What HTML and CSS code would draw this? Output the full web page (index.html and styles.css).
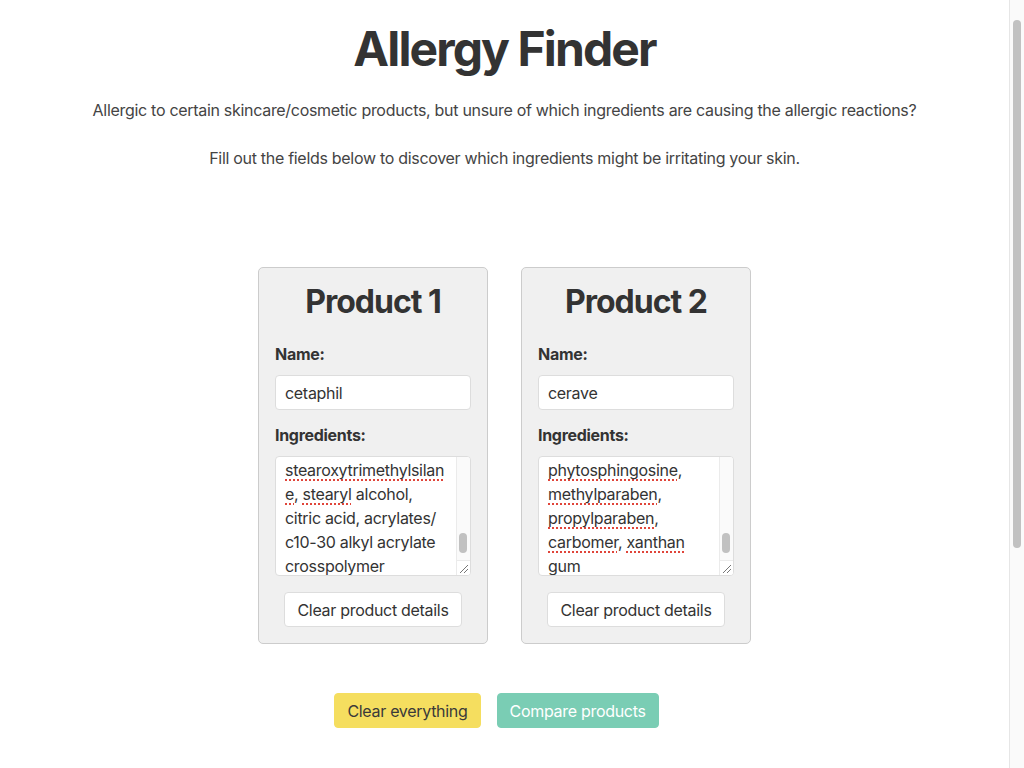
FILE: index.html
```html
<!DOCTYPE html>
<html lang="en">
<head>
<meta charset="utf-8">
<title>Allergy Finder</title>
<link rel="stylesheet" href="styles.css">
</head>
<body>
<main class="page">
  <header class="intro">
    <h1 class="title">Allergy Finder</h1>
    <p class="lead">Allergic to certain skincare/cosmetic products, but unsure of which ingredients are causing the allergic reactions?</p>
    <p class="lead">Fill out the fields below to discover which ingredients might be irritating your skin.</p>
  </header>

  <section class="products">
    <div class="card">
      <h2 class="card-title">Product 1</h2>
      <label class="field-label">Name:</label>
      <input class="text-input" type="text" value="cetaphil" spellcheck="false">
      <label class="field-label">Ingredients:</label>
      <div class="textbox">
        <div class="textbox-body">
          <div class="textbox-content"><span class="sp">stearoxytrimethylsilan</span><br><span class="sp">e</span>, <span class="sp">stearyl</span> alcohol,<br>citric acid, acrylates/<br>c10-30 alkyl acrylate<br><span class="sp">crosspolymer</span></div>
        </div>
        <div class="textbox-bar">
          <div class="bar-track"><div class="bar-thumb"></div></div>
          <div class="resizer"><svg width="13" height="13" viewBox="0 0 13 13"><path d="M3 11 L11 3 M7 11 L11 7" stroke="#777" stroke-width="1" fill="none"/></svg></div>
        </div>
      </div>
      <button class="btn btn-plain" type="button">Clear product details</button>
    </div>

    <div class="card">
      <h2 class="card-title">Product 2</h2>
      <label class="field-label">Name:</label>
      <input class="text-input" type="text" value="cerave" spellcheck="false">
      <label class="field-label">Ingredients:</label>
      <div class="textbox">
        <div class="textbox-body">
          <div class="textbox-content"><span class="sp">phytosphingosine</span>,<br><span class="sp">methylparaben</span>,<br><span class="sp">propylparaben</span>,<br><span class="sp">carbomer</span>, <span class="sp">xanthan</span><br>gum</div>
        </div>
        <div class="textbox-bar">
          <div class="bar-track"><div class="bar-thumb"></div></div>
          <div class="resizer"><svg width="13" height="13" viewBox="0 0 13 13"><path d="M3 11 L11 3 M7 11 L11 7" stroke="#777" stroke-width="1" fill="none"/></svg></div>
        </div>
      </div>
      <button class="btn btn-plain" type="button">Clear product details</button>
    </div>
  </section>

  <div class="actions">
    <button class="btn btn-yellow" type="button">Clear everything</button><button class="btn btn-teal" type="button">Compare products</button>
  </div>
</main>
<aside class="page-scrollbar"><div class="page-thumb"></div></aside>
</body>
</html>
```

FILE: styles.css
```css
html {
  background: #ffffff;
}

body {
  margin: 0;
  display: flex;
  align-items: flex-start;
  font-family: Inter, "Helvetica Neue", Arial, sans-serif;
  font-size: 16px;
  line-height: 24px;
  letter-spacing: -0.3px;
  color: #444444;
}

.page {
  flex: 1;
  min-width: 0;
  display: flex;
  flex-direction: column;
  align-items: center;
}

.page-scrollbar {
  width: 15px;
  height: 768px;
  box-sizing: border-box;
  background: #fafafa;
  border-left: 1px solid #e6e6e6;
  padding: 20px 3px 0 3px;
  flex-shrink: 0;
}

.page-thumb {
  width: 8px;
  height: 528px;
  border-radius: 4px;
  background: #c1c1c1;
}

.intro {
  text-align: center;
  padding-top: 20px;
}

.title {
  margin: 0 0 20px;
  font-size: 48px;
  line-height: 58px;
  font-weight: 700;
  color: #333333;
  letter-spacing: -1.9px;
}

.lead {
  margin: 0 0 24px;
  font-size: 16px;
  line-height: 24px;
  color: #444444;
}

.products {
  display: flex;
  gap: 33px;
  margin-top: 73px;
}

.card {
  width: 230px;
  box-sizing: border-box;
  background: #f0f0f0;
  border: 1px solid #cccccc;
  border-radius: 5px;
  padding: 15px 16px 16px;
  display: flex;
  flex-direction: column;
}

.card-title {
  margin: 0 0 21px;
  font-size: 32px;
  line-height: 38px;
  font-weight: 700;
  text-align: center;
  color: #333333;
  letter-spacing: -1px;
}

.field-label {
  font-weight: 700;
  color: #333333;
  line-height: 24px;
  margin-bottom: 9px;
}

.text-input {
  box-sizing: border-box;
  width: 100%;
  height: 35px;
  margin: 0 0 13px;
  padding: 0 9px;
  border: 1px solid #dddddd;
  border-radius: 4px;
  background: #ffffff;
  font-family: inherit;
  font-size: 16px;
  letter-spacing: -0.3px;
  color: #333333;
  outline: none;
}

.textbox {
  box-sizing: border-box;
  height: 120px;
  border: 1px solid #dddddd;
  border-radius: 4px;
  background: #ffffff;
  display: flex;
  overflow: hidden;
  margin-bottom: 16px;
}

.textbox-body {
  flex: 1;
  min-width: 0;
  overflow: hidden;
  display: flex;
  flex-direction: column-reverse;
}

.textbox-content {
  padding: 0 4px 0 9px;
  margin-bottom: -3px;
  font-size: 16px;
  line-height: 24px;
  color: #333333;
  overflow-wrap: anywhere;
}

.textbox-bar {
  width: 14px;
  box-sizing: border-box;
  background: #fafafa;
  border-left: 1px solid #ebebeb;
  display: flex;
  flex-direction: column;
}

.bar-track {
  flex: 1;
  display: flex;
  flex-direction: column;
  justify-content: flex-end;
  padding: 0 3px 7px 2px;
}

.bar-thumb {
  width: 8px;
  height: 20px;
  border-radius: 4px;
  background: #c1c1c1;
}

.resizer {
  height: 15px;
  box-sizing: border-box;
  border-top: 1px solid #ebebeb;
  background: #ffffff;
  display: flex;
  align-items: flex-end;
  justify-content: flex-end;
}

.resizer svg {
  display: block;
}

.sp {
  text-decoration: underline dotted #e0453a;
  text-decoration-thickness: 2px;
  text-underline-offset: 3px;
}

.btn {
  height: 35px;
  padding: 0 12px;
  border-radius: 4px;
  font-family: inherit;
  font-size: 16px;
  line-height: 24px;
  letter-spacing: -0.3px;
  cursor: pointer;
}

.btn-plain {
  align-self: center;
  background: #ffffff;
  border: 1px solid #dddddd;
  color: #333333;
}

.actions {
  margin-top: 49px;
  display: flex;
}

.btn-yellow {
  background: #f5de5f;
  border: 1px solid #f5de5f;
  color: #3a3a3a;
  margin-right: 16px;
}

.btn-teal {
  background: #7acdb4;
  border: 1px solid #7acdb4;
  color: #ffffff;
  margin-right: 16px;
}
```
